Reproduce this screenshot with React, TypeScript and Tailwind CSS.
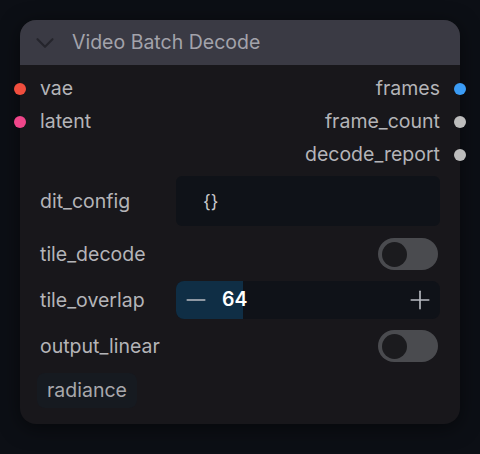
import { ChevronDown, Minus, Plus } from 'lucide-react'

const font = { fontFamily: 'Inter, "Noto Sans", sans-serif' }

function Slot({ label, color, side }: { label: string; color: string; side: 'in' | 'out' }) {
  if (side === 'in') {
    return (
      <div className="flex h-[33px] items-center gap-[14px] -ml-[6px]">
        <span className={`h-[12px] w-[12px] rounded-full ${color}`} />
        <span className="text-[19.5px] text-[#b4b4b8]">{label}</span>
      </div>
    )
  }
  return (
    <div className="flex h-[33px] items-center justify-end gap-[14px] -mr-[6px]">
      <span className="text-[19.5px] text-[#b4b4b8]">{label}</span>
      <span className={`h-[12px] w-[12px] rounded-full ${color}`} />
    </div>
  )
}

function Toggle() {
  return (
    <div className="flex h-[32px] w-[60px] items-center rounded-full bg-[#4a4b4f] px-[4px]">
      <span className="h-[25px] w-[25px] rounded-full bg-[#1b1b1e]" />
    </div>
  )
}

export default function App() {
  return (
    <div className="h-[454px] w-full bg-[#0c0f15] pl-[20px] pt-[20px]" style={font}>
      <div className="w-[440px] rounded-[16px] bg-[#18171b] shadow-[0_4px_20px_rgba(0,0,0,0.5)]">
        {/* Header */}
        <div className="flex h-[45px] items-center gap-[12px] rounded-t-[16px] bg-[#3a3a44] pl-[10px]">
          <ChevronDown className="h-[30px] w-[30px] text-[#25252c]" strokeWidth={1.7} />
          <span className="text-[19.5px] text-[#a3a3ab]">Video Batch Decode</span>
        </div>

        {/* Slots */}
        <div className="flex justify-between pt-[7px]">
          <div className="flex flex-col">
            <Slot label="vae" color="bg-[#f04e3e]" side="in" />
            <Slot label="latent" color="bg-[#f0468a]" side="in" />
          </div>
          <div className="flex flex-col">
            <Slot label="frames" color="bg-[#3b9cf5]" side="out" />
            <Slot label="frame_count" color="bg-[#bdbdbd]" side="out" />
            <Slot label="decode_report" color="bg-[#bdbdbd]" side="out" />
          </div>
        </div>

        {/* Widgets */}
        <div className="flex flex-col px-[20px] pb-[16px] text-[19.5px] text-[#b4b4b8]">
          <div className="mt-[5px] flex h-[50px] items-center">
            <span className="w-[136px] pt-[1px]">dit_config</span>
            <div className="flex h-full flex-1 items-center rounded-[6px] bg-[#0f1218] pl-[27px] text-[18px] text-[#c9c9cc]">
              {'{}'}
            </div>
          </div>

          <div className="mt-[10px] flex h-[36px] items-center justify-between pr-[2px]">
            <span className="pt-[1px]">tile_decode</span>
            <Toggle />
          </div>

          <div className="mt-[9px] flex h-[38px] items-center">
            <span className="w-[136px] pt-[1px]">tile_overlap</span>
            <div className="relative flex h-full flex-1 items-center overflow-hidden rounded-[8px] bg-[#0f1218]">
              <div className="absolute left-0 top-0 h-full w-[67px] bg-[#0f2e45]" />
              <Minus className="relative ml-[5px] h-[30px] w-[30px] text-[#b9bcc2]" strokeWidth={1.3} />
              <span className="relative ml-[11px] font-semibold text-white">64</span>
              <Plus className="relative ml-auto mr-[5px] h-[30px] w-[30px] text-[#b9bcc2]" strokeWidth={1.3} />
            </div>
          </div>

          <div className="mt-[9px] flex h-[36px] items-center justify-between pr-[2px]">
            <span className="pt-[1px]">output_linear</span>
            <Toggle />
          </div>

          <div className="mt-[9px] flex h-[35px]">
            <div className="-ml-[3px] flex h-full items-center rounded-[8px] bg-[#161a20] px-[10px] pt-[1px] text-[#a8a8ac]">
              radiance
            </div>
          </div>
        </div>
      </div>
    </div>
  )
}
